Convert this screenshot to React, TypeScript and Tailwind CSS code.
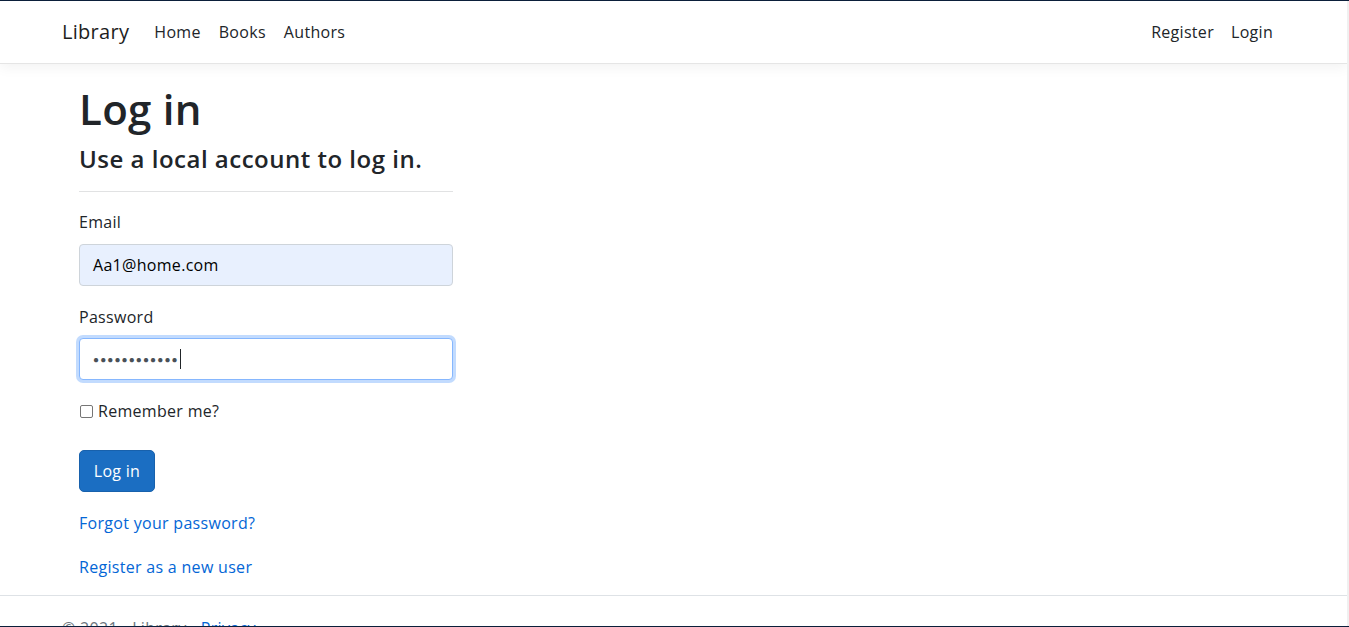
import React from 'react';

const font = { fontFamily: '"Open Sans", "Noto Sans", sans-serif' };

const navLinks = ['Home', 'Books', 'Authors'];

export default function App() {
  return (
    <div
      style={font}
      className="h-[627px] w-full overflow-hidden border-y border-[#0b1f3a] bg-white text-[#212529] tracking-[0.3px] flex"
    >
      <div className="flex-1 flex flex-col min-w-0">
        {/* Navbar */}
        <header className="h-[63px] shrink-0 border-b border-[#e5e5e5] bg-white shadow-[0_4px_12px_rgba(0,0,0,0.05)] flex items-center justify-between pl-[62px] pr-[74px]">
          <div className="flex items-center">
            <span className="text-[20px] text-[#1d1d1d] mr-[25px]">Library</span>
            <nav className="flex items-center gap-[18px] text-[16px]">
              {navLinks.map((l) => (
                <span key={l}>{l}</span>
              ))}
            </nav>
          </div>
          <nav className="flex items-center gap-[17px] text-[16px]">
            <span>Register</span>
            <span>Login</span>
          </nav>
        </header>

        {/* Main */}
        <main className="flex-1 pl-[79px] pt-[21px]">
          <h1 className="text-[42px] leading-[48px] font-semibold tracking-[0.3px]">Log in</h1>
          <div className="w-[374px]">
            <h4 className="mt-[11px] text-[24px] leading-[29px] font-semibold tracking-[0.5px]">Use a local account to log in.</h4>
            <hr className="mt-[18px] mb-[18px] border-t border-[#e1e2e3]" />

            <label className="block text-[16px] leading-[24px]">Email</label>
            <div className="mt-[10px] h-[42px] rounded-[4px] border border-[#ced4da] bg-[#e8f0fe] flex items-center px-[13px] text-[16px] text-black">
              Aa1@home.com
            </div>

            <label className="block mt-[19px] text-[16px] leading-[24px]">Password</label>
            <div className="mt-[9px] h-[42px] rounded-[4px] border border-[#86b7fe] shadow-[0_0_0_3px_rgba(13,110,253,0.25)] bg-white flex items-center px-[13px]">
              <span className="text-[10px] tracking-[1.1px] text-[#495057]">●●●●●●●●●●●●</span>
              <span className="ml-[1px] w-px h-[20px] bg-[#212529]" />
            </div>

            <label className="mt-[19px] flex items-center text-[16px] leading-[24px]">
              <span className="mr-[5px] ml-[1px] w-[13px] h-[13px] rounded-[2px] border border-[#767676] bg-white" />
              Remember me?
            </label>

            <button className="mt-[27px] h-[42px] w-[76px] rounded-[5px] border border-[#1861ac] bg-[#1b6ec2] text-white text-[16px]">
              Log in
            </button>

            <p className="mt-[19px] text-[16px] leading-[24px] text-[#0366d6]">Forgot your password?</p>
            <p className="mt-[20px] text-[16px] leading-[24px] text-[#0366d6]">Register as a new user</p>
          </div>
        </main>

        {/* Footer */}
        <footer className="h-[31px] shrink-0 border-t border-[#dee2e6] pl-[62px] pt-[20px] text-[16px] leading-[24px] text-[#6c757d]">
          © 2021 - Library - <span className="text-[#0366d6]">Privacy</span>
        </footer>
      </div>
      <div className="w-[2px] shrink-0 bg-[#f0f0f0]" />
    </div>
  );
}
